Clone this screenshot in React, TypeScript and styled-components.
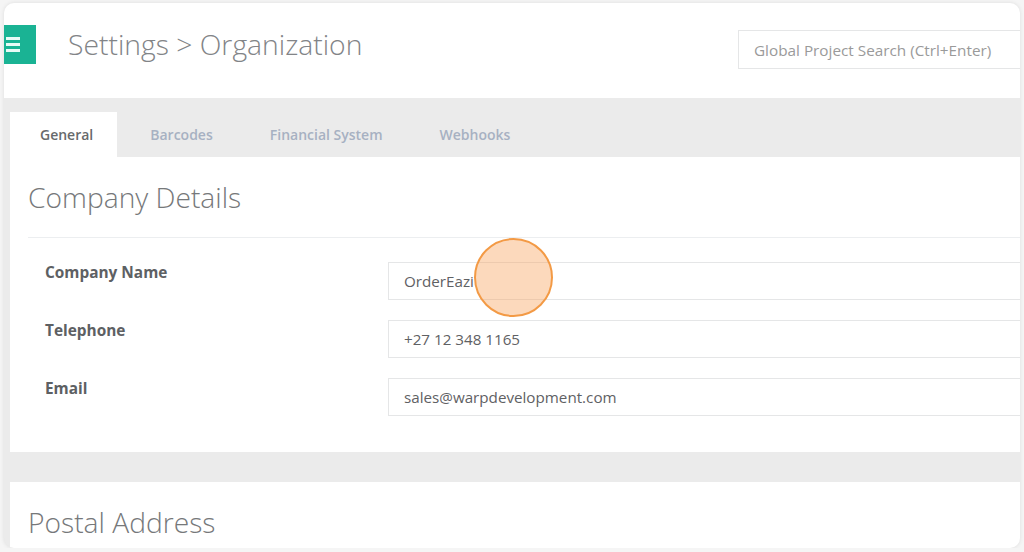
import React from "react";
import styled, { createGlobalStyle } from "styled-components";

const Global = createGlobalStyle`
  html, body { margin: 0; padding: 0; background: #f5f5f5; }
  body { font-family: "Open Sans", "Liberation Sans", sans-serif; }
  * { box-sizing: border-box; }
`;

const Frame = styled.div`
  position: relative;
  margin: 3px 4px 0 4px;
  height: 545px;
  border-radius: 10px;
  overflow: hidden;
  background: #ebebeb;
  box-shadow: 0 0 4px rgba(0, 0, 0, 0.1);
`;

const Header = styled.header`
  height: 95px;
  background: #ffffff;
  display: flex;
  align-items: flex-start;
  padding-top: 22px;
  overflow: hidden;
`;

const MenuButton = styled.div`
  flex: 0 0 32px;
  height: 39px;
  background: #1ab394;
  display: flex;
  flex-direction: column;
  justify-content: center;
  gap: 3px;
  padding-left: 2px;
`;

const Bar = styled.span`
  display: block;
  width: 14px;
  height: 3px;
  background: #e8fbf6;
`;

const Title = styled.h1`
  flex: 1;
  margin: 0 0 0 32px;
  font-size: 28.3px;
  font-weight: 300;
  line-height: 38px;
  color: #828487;
  white-space: nowrap;
`;

const Search = styled.div`
  flex: 0 0 300px;
  margin: 5px -18px 0 0;
  height: 39px;
  border: 1px solid #e5e6e7;
  display: flex;
  align-items: center;
  padding-left: 15px;
  font-size: 15.3px;
  color: #9a9a9a;
  white-space: nowrap;
`;

const Body = styled.div`
  padding-left: 6px;
`;

const Tabs = styled.nav`
  display: flex;
  padding-top: 14px;
  height: 59px;
`;

const Tab = styled.div<{ $active?: boolean }>`
  height: 45px;
  display: flex;
  align-items: center;
  padding: 0 24px 0 30px;
  margin-right: 3px;
  font-size: 14px;
  font-weight: 600;
  color: ${(p) => (p.$active ? "#676a6c" : "#a7b1c2")};
  background: ${(p) => (p.$active ? "#ffffff" : "transparent")};
`;

const Panel = styled.section<{ $bottom?: number }>`
  background: #ffffff;
  padding: 22px 0 ${(p) => p.$bottom ?? 0}px 18px;
`;

const Heading = styled.h2`
  margin: 0;
  font-size: 28.2px;
  font-weight: 300;
  line-height: 36px;
  color: #76787a;
`;

const Divider = styled.hr`
  margin: 22px 0 24px 0;
  border: 0;
  border-top: 1px solid #eceef0;
`;

const Form = styled.div`
  display: grid;
  grid-template-columns: 343px 1fr;
  row-gap: 20px;
  padding-left: 17px;
  overflow: hidden;
`;

const Label = styled.label`
  padding-top: 2px;
  font-size: 15.4px;
  font-weight: 700;
  line-height: 18px;
  color: #5d6063;
`;

const Field = styled.div`
  height: 38px;
  margin-right: -20px;
  border: 1px solid #e5e6e7;
  display: flex;
  align-items: center;
  padding-left: 15px;
  font-size: 15.2px;
  color: #5f6164;
`;

const Gap = styled.div`
  height: 30px;
`;

const ClickMark = styled.div`
  position: absolute;
  left: 470px;
  top: 235px;
  width: 79px;
  height: 79px;
  border-radius: 50%;
  border: 2px solid #f39a45;
  background: rgba(248, 165, 95, 0.42);
`;

const fields = [
  { label: "Company Name", value: "OrderEazi" },
  { label: "Telephone", value: "+27 12 348 1165" },
  { label: "Email", value: "sales@warpdevelopment.com" },
];

export default function App() {
  return (
    <>
      <Global />
      <Frame>
        <Header>
          <MenuButton>
            <Bar />
            <Bar />
            <Bar />
          </MenuButton>
          <Title>Settings &gt; Organization</Title>
          <Search>Global Project Search (Ctrl+Enter)</Search>
        </Header>
        <Body>
          <Tabs>
            <Tab $active>General</Tab>
            <Tab>Barcodes</Tab>
            <Tab>Financial System</Tab>
            <Tab>Webhooks</Tab>
          </Tabs>
          <Panel $bottom={36}>
            <Heading>Company Details</Heading>
            <Divider />
            <Form>
              {fields.map((f) => (
                <React.Fragment key={f.label}>
                  <Label>{f.label}</Label>
                  <Field>{f.value}</Field>
                </React.Fragment>
              ))}
            </Form>
          </Panel>
          <Gap />
          <Panel $bottom={40}>
            <Heading>Postal Address</Heading>
          </Panel>
        </Body>
        <ClickMark />
      </Frame>
    </>
  );
}
